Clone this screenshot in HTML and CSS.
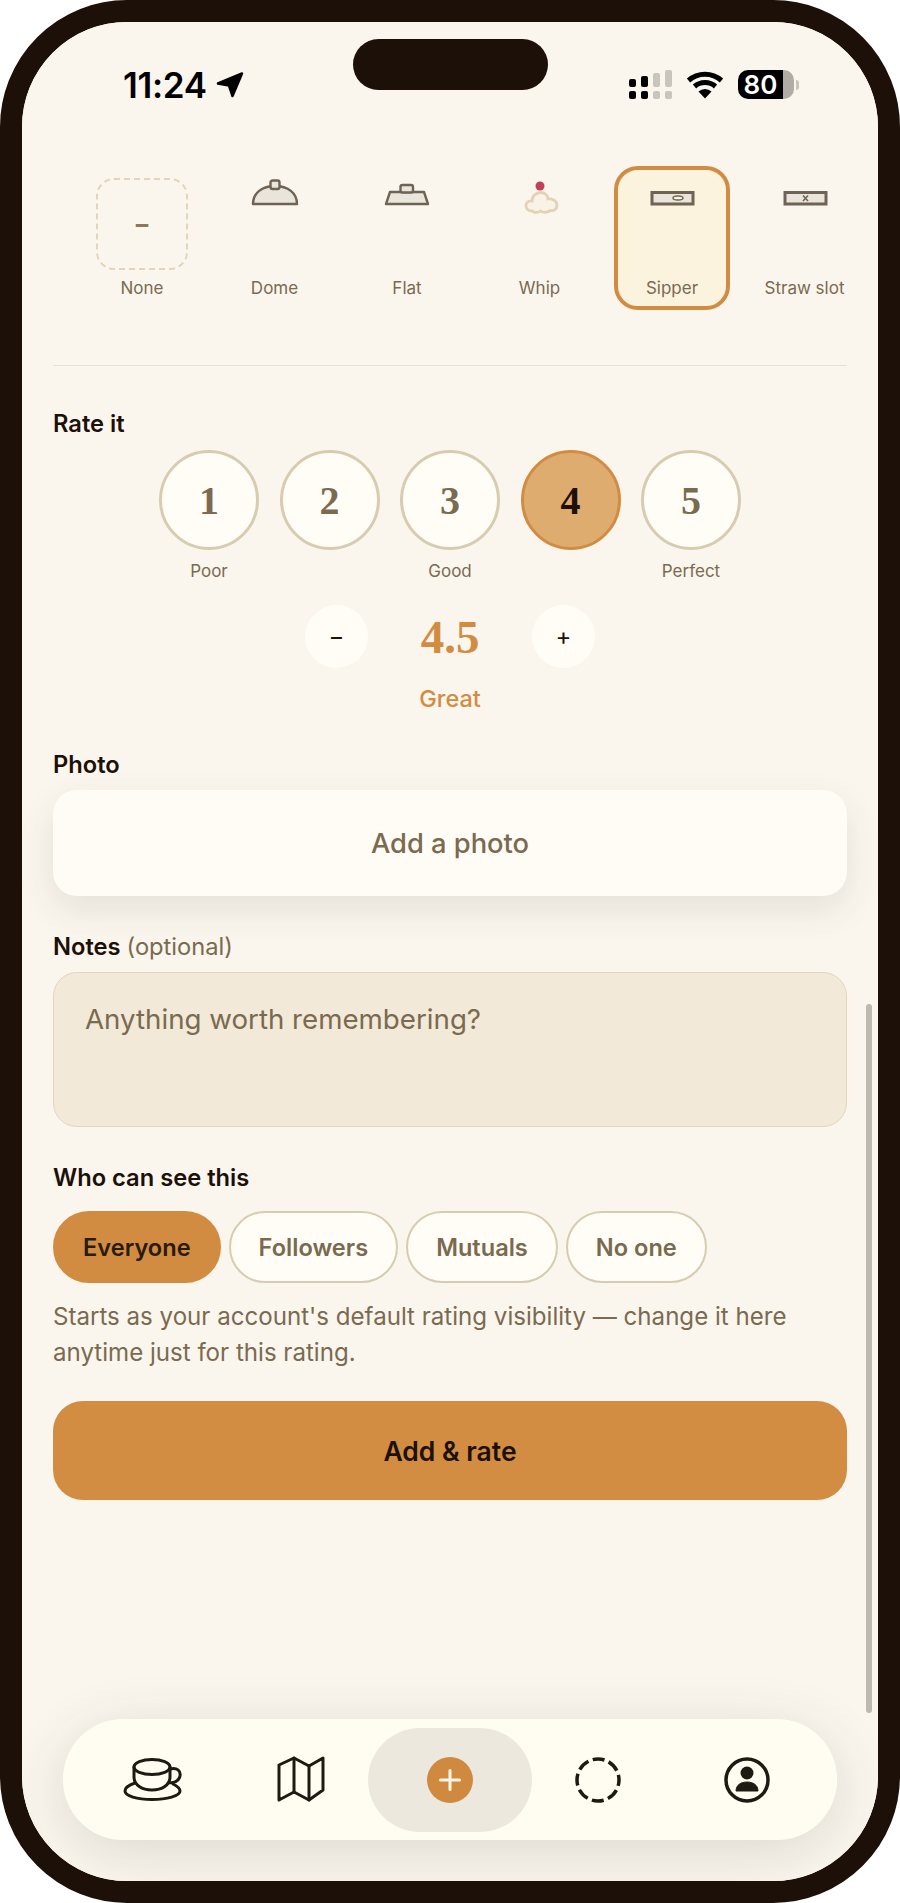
FILE: index.html
```html
<!DOCTYPE html>
<html lang="en">
<head>
<meta charset="UTF-8">
<meta name="viewport" content="width=device-width, initial-scale=1.0">
<title>Add &amp; rate</title>
<link rel="stylesheet" href="styles.css">
</head>
<body>
  <div class="phone">
    <div class="screen">
      <div class="island"></div>

      <div class="status">
        <div class="status-left">
          <span class="time">11:24</span>
          <svg class="arrow" width="28" height="26" viewBox="0 0 28 26"><path d="M2 11.500 26 1.500 16.500 24 13 13.500Z" fill="#000" stroke="#000" stroke-width="2.500" stroke-linejoin="round"/></svg>
        </div>
        <div class="status-right">
          <svg width="43" height="29" viewBox="0 0 43 29">
            <g fill="#000">
              <rect x="0" y="9" width="7" height="8" rx="2"/><rect x="0" y="21" width="7" height="8" rx="2"/>
              <rect x="12" y="6" width="7" height="11" rx="2"/><rect x="12" y="21" width="7" height="8" rx="2"/>
            </g>
            <g fill="#c8c5bd">
              <rect x="24" y="3" width="7" height="14" rx="2"/><rect x="24" y="21" width="7" height="8" rx="2"/>
              <rect x="36" y="0" width="7" height="17" rx="2"/><rect x="36" y="21" width="7" height="8" rx="2"/>
            </g>
          </svg>
          <svg class="wifi" width="38" height="28" viewBox="0 0 38 28">
            <path d="M19 27.500 12.500 20.500a9.500 9.500 0 0 1 13 0Z" fill="#000"/>
            <path d="M2.500 9.500a25 25 0 0 1 33 0M8.500 15.500a16 16 0 0 1 21 0" fill="none" stroke="#000" stroke-width="5"/>
          </svg>
          <div class="battery"><span class="battery-fill">80</span><span class="battery-rest"></span></div>
          <span class="battery-nub"></span>
        </div>
      </div>

      <div class="lids">
        <div class="lid">
          <div class="tile tile-none">–</div>
          <span>None</span>
        </div>
        <div class="lid">
          <div class="tile">
            <svg width="60" height="40" viewBox="0 0 60 40"><path d="M8 26C8 15 17 8 30 8S52 15 52 26Z" fill="#e9e5da" stroke="#6e6354" stroke-width="2.400" stroke-linejoin="round"/><rect x="25.500" y="2.500" width="9" height="8.500" rx="2" fill="#e9e5da" stroke="#6e6354" stroke-width="2.400"/></svg>
          </div>
          <span>Dome</span>
        </div>
        <div class="lid">
          <div class="tile">
            <svg width="60" height="40" viewBox="0 0 60 40"><path d="M13 14H47L51 26H9Z" fill="#e9e5da" stroke="#6e6354" stroke-width="2.400" stroke-linejoin="round"/><rect x="23.500" y="7" width="12.500" height="7.500" rx="2" fill="#e9e5da" stroke="#6e6354" stroke-width="2.400"/></svg>
          </div>
          <span>Flat</span>
        </div>
        <div class="lid">
          <div class="tile">
            <svg width="60" height="40" viewBox="0 0 60 40"><path d="M22 33C17 33 15.500 29.500 16 27 16.500 24 19 22.500 22 23 22 18 26 14.500 31 14.500 35 14.500 38 17.500 38 21 42 20 47 23 47 27.500 47 31 44 33.500 40 32.500 38 34.500 33 35 30.500 33 28 35 24 35 22 33Z" fill="#f9f3e7" stroke="#e3d2b6" stroke-width="2.800"/><circle cx="30" cy="8" r="4.500" fill="#c0405a"/></svg>
          </div>
          <span>Whip</span>
        </div>
        <div class="lid lid-on">
          <div class="tile">
            <svg width="60" height="40" viewBox="0 0 60 40"><rect x="10" y="14.500" width="41" height="11.500" fill="#e9e5da" stroke="#6e6354" stroke-width="3"/><ellipse cx="36" cy="20" rx="5" ry="2" fill="#fdf3de" stroke="#6e6354" stroke-width="1.400"/></svg>
          </div>
          <span>Sipper</span>
        </div>
        <div class="lid">
          <div class="tile">
            <svg width="60" height="40" viewBox="0 0 60 40"><rect x="10" y="14.500" width="41" height="11.500" fill="#e9e5da" stroke="#6e6354" stroke-width="3"/><path d="M28 17.500 33 23M33 17.500 28 23" stroke="#6e6354" stroke-width="1.600"/></svg>
          </div>
          <span>Straw slot</span>
        </div>
      </div>

      <div class="divider"></div>

      <div class="form">
        <div class="label rate-label">Rate it</div>
        <div class="rates">
          <div class="rate"><div class="rate-circle">1</div><span>Poor</span></div>
          <div class="rate"><div class="rate-circle">2</div><span>&nbsp;</span></div>
          <div class="rate"><div class="rate-circle">3</div><span>Good</span></div>
          <div class="rate"><div class="rate-circle rate-on">4</div><span>&nbsp;</span></div>
          <div class="rate"><div class="rate-circle">5</div><span>Perfect</span></div>
        </div>

        <div class="stepper">
          <div class="step">−</div>
          <div class="step-value">4.5</div>
          <div class="step">+</div>
        </div>
        <div class="rate-word">Great</div>

        <div class="label photo-label">Photo</div>
        <div class="photo-btn">Add a photo</div>

        <div class="label notes-label">Notes <span class="optional">(optional)</span></div>
        <div class="notes">Anything worth remembering?</div>

        <div class="label who-label">Who can see this</div>
        <div class="pills">
          <div class="pill pill-on">Everyone</div>
          <div class="pill">Followers</div>
          <div class="pill">Mutuals</div>
          <div class="pill">No one</div>
        </div>
        <p class="hint">Starts as your account's default rating visibility — change it here anytime just for this rating.</p>

        <div class="submit">Add &amp; rate</div>
      </div>

      <div class="scrollbar"></div>

      <div class="tabbar">
        <div class="tab">
          <svg width="64" height="48" viewBox="0 0 64 48" fill="none" stroke="#1c1a12" stroke-width="3" stroke-linecap="round" stroke-linejoin="round">
            <ellipse cx="31" cy="11" rx="18" ry="7.500"/>
            <path d="M13 11V21C13 29 21 34 31 34S49 29 49 21V11"/>
            <path d="M49 13C56 11 60 15 59 20 58 25 53 27 47 27"/>
            <path d="M14 27C8 29 4 32 4 35 4 40 16 43.500 31 43.500S59 40 59 35C59 32 56 30 52 28"/>
          </svg>
        </div>
        <div class="tab">
          <svg width="50" height="48" viewBox="0 0 50 48" fill="none" stroke="#1c1a12" stroke-width="3" stroke-linecap="round" stroke-linejoin="round">
            <path d="M3 9 18 2 33 10 47 2V34L33 44 18 36 3 44Z"/>
            <path d="M18 2V36M33 10V44"/>
          </svg>
        </div>
        <div class="tab tab-on">
          <svg width="46" height="46" viewBox="0 0 46 46"><circle cx="23" cy="23" r="23" fill="#d08a3f"/><path d="M13.500 23H32.500M23 13.500V32.500" stroke="#fdf6e8" stroke-width="3" stroke-linecap="round"/></svg>
        </div>
        <div class="tab">
          <svg width="48" height="48" viewBox="0 0 48 48"><circle cx="24" cy="24" r="21" fill="none" stroke="#1c1a12" stroke-width="3.500" stroke-dasharray="12 4.490" stroke-dashoffset="6"/></svg>
        </div>
        <div class="tab">
          <svg width="48" height="48" viewBox="0 0 48 48"><circle cx="24" cy="24" r="21" fill="none" stroke="#1c1a12" stroke-width="3.500"/><circle cx="24" cy="17" r="6.500" fill="#1c1a12"/><path d="M13 35C13 29 18 26 24 26S35 29 35 35Z" fill="#1c1a12" stroke="#1c1a12" stroke-linejoin="round"/></svg>
        </div>
      </div>
    </div>
  </div>
</body>
</html>
```

FILE: styles.css
```css
body {
  margin: 0;
  background-color: #fff;
  font-family: Inter, "Noto Sans", sans-serif;
  color: #1c1008;
}

.phone {
  width: 900px;
  height: 1903px;
  box-sizing: border-box;
  border: 22px solid #1c1008;
  border-radius: 127px;
  overflow: hidden;
}

.screen {
  position: relative;
  height: 100%;
  background-color: #faf6ee;
  overflow: hidden;
}

.island {
  position: absolute;
  left: 331px;
  top: 17px;
  width: 195px;
  height: 51px;
  border-radius: 26px;
  background-color: #1c1008;
}

/* status bar */
.status {
  display: flex;
  justify-content: space-between;
  height: 144px;
  box-sizing: border-box;
  padding: 48px 79px 0 101px;
}

.status-left {
  display: flex;
  align-items: center;
  gap: 9px;
  height: 30px;
}

.time {
  font-size: 35px;
  font-weight: 600;
  color: #000;
  letter-spacing: -0.3px;
}

.status-right {
  display: flex;
  align-items: flex-start;
}

.wifi {
  margin: 1px 14px 0;
}

.battery {
  display: flex;
  width: 56px;
  height: 29px;
}

.battery-fill {
  width: 45px;
  border-radius: 10px 0 0 10px;
  background-color: #000;
  color: #fff;
  font-size: 26px;
  font-weight: 600;
  line-height: 29px;
  text-align: center;
}

.battery-rest {
  flex: 1;
  border-radius: 0 10px 10px 0;
  background-color: #b0ada6;
}

.battery-nub {
  width: 3px;
  height: 10px;
  margin: 10px 0 0 2px;
  border-radius: 0 3px 3px 0;
  background-color: #c8c5bd;
}

/* lid picker */
.lids {
  display: flex;
  gap: 16.5px;
  height: 144px;
  padding-left: 62px;
}

.lid {
  flex: 0 0 116px;
  display: flex;
  flex-direction: column;
  align-items: center;
  box-sizing: border-box;
  padding-top: 8px;
  border: 4px solid transparent;
  border-radius: 24px;
  font-size: 17px;
  color: #7a6a50;
}

.lid span {
  margin-top: 8px;
  line-height: 20px;
  white-space: nowrap;
}

.lid-on {
  border-color: #d28c41;
  background-color: #fcf3df;
}

.tile {
  display: flex;
  justify-content: center;
  flex-shrink: 0;
  width: 92px;
  height: 92px;
  box-sizing: border-box;
}

.tile-none {
  align-items: center;
  border: 2px dashed #e3d6b8;
  border-radius: 18px;
  color: #8a7a5a;
  font-size: 25px;
  font-weight: 700;
}

.divider {
  height: 1px;
  margin: 55px 31px 0;
  background-color: #e8e0d0;
}

/* form */
.form {
  padding: 0 31px;
}

.label {
  font-size: 23.7px;
  font-weight: 600;
  line-height: 28px;
}

.rate-label {
  margin-top: 44px;
}

.rates {
  display: flex;
  justify-content: center;
  gap: 20.5px;
  margin-top: 12px;
}

.rate {
  width: 100px;
  text-align: center;
  font-size: 17px;
  color: #7a6a50;
}

.rate span {
  display: block;
  margin-top: 10px;
  line-height: 22px;
}

.rate-circle {
  display: flex;
  align-items: center;
  justify-content: center;
  width: 100px;
  height: 100px;
  box-sizing: border-box;
  border: 3px solid #d8ccb0;
  border-radius: 50%;
  background-color: #fffdf6;
  font-family: "Liberation Serif", serif;
  font-size: 40px;
  font-weight: 700;
  color: #7a6a50;
}

.rate-on {
  border-color: #d28c41;
  background-color: #dfac70;
  color: #1c1008;
}

.stepper {
  display: flex;
  justify-content: center;
  align-items: center;
  margin-top: 23px;
}

.step {
  display: flex;
  align-items: center;
  justify-content: center;
  width: 63px;
  height: 63px;
  border-radius: 50%;
  background-color: #fffdf6;
  font-size: 24px;
}

.step-value {
  width: 164px;
  text-align: center;
  font-family: "Liberation Serif", serif;
  font-size: 47px;
  font-weight: 700;
  color: #d28c41;
}

.rate-word {
  margin-top: 17px;
  text-align: center;
  font-size: 23.5px;
  font-weight: 500;
  line-height: 28px;
  color: #d28c41;
}

.photo-label {
  margin-top: 38px;
}

.photo-btn {
  display: flex;
  align-items: center;
  justify-content: center;
  height: 106px;
  margin-top: 11px;
  border-radius: 24px;
  background-color: #fffcf5;
  box-shadow: 0 14px 36px rgba(60, 40, 20, 0.1);
  font-size: 27.3px;
  font-weight: 500;
  color: #7a6a50;
}

.notes-label {
  margin-top: 37px;
}

.optional {
  font-weight: 400;
  color: #7a6a50;
}

.notes {
  height: 155px;
  box-sizing: border-box;
  margin-top: 11px;
  padding: 28px 31px;
  border: 1.500px solid #e3d6bd;
  border-radius: 24px;
  background-color: #f2e9d8;
  font-size: 27.7px;
  line-height: 36px;
  color: #7a6a50;
}

.who-label {
  margin-top: 37px;
}

.pills {
  display: flex;
  gap: 8px;
  margin-top: 19px;
}

.pill {
  display: flex;
  align-items: center;
  height: 72px;
  box-sizing: border-box;
  padding: 0 28px;
  border: 2px solid #d8ccb0;
  border-radius: 36px;
  background-color: #fffdf6;
  font-size: 23.6px;
  font-weight: 600;
  color: #7a6a50;
}

.pill-on {
  border-color: #d28c41;
  background-color: #d28c41;
  color: #2a1a0a;
}

.hint {
  margin: 16px 0 0;
  font-size: 24.1px;
  line-height: 36px;
  color: #7a6a50;
}

.submit {
  display: flex;
  align-items: center;
  justify-content: center;
  height: 99px;
  margin-top: 30px;
  border-radius: 30px;
  background-color: #d28d43;
  font-size: 26.5px;
  font-weight: 600;
}

.scrollbar {
  position: absolute;
  left: 844px;
  top: 982px;
  width: 6px;
  height: 709px;
  border-radius: 3px;
  background-color: #bdb9b0;
}

/* bottom tabs */
.tabbar {
  position: absolute;
  left: 41px;
  bottom: 41px;
  display: flex;
  align-items: center;
  width: 774px;
  height: 121px;
  box-sizing: border-box;
  padding: 0 15.500px;
  border-radius: 60px;
  background-color: #fffdf2;
  box-shadow: 0 12px 60px rgba(60, 40, 20, 0.14);
}

.tab {
  flex: 0 0 148.500px;
  display: flex;
  align-items: center;
  justify-content: center;
  height: 104px;
}

.tab-on {
  flex-basis: 164px;
  margin: 0 -7.750px;
  border-radius: 52px;
  background-color: #ece8de;
}
```
